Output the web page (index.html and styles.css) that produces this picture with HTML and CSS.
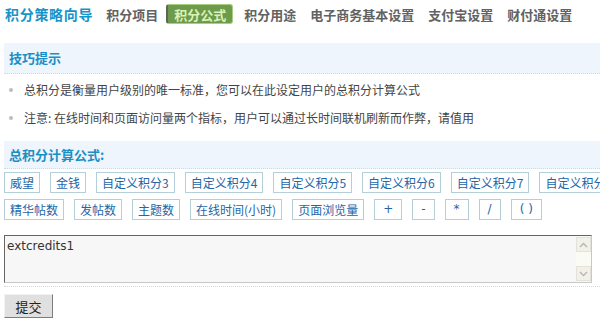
FILE: index.html
```html
<!DOCTYPE html>
<html lang="zh-CN">
<head>
    <meta charset="UTF-8">
    <title>积分策略向导</title>
    <link rel="stylesheet" href="styles.css">
</head>
<body>
    <div class="page">
        <div class="nav">
            <span class="nav-title">积分策略向导</span>
            <a class="tab">积分项目</a>
            <a class="tab active">积分公式</a>
            <a class="tab">积分用途</a>
            <a class="tab">电子商务基本设置</a>
            <a class="tab">支付宝设置</a>
            <a class="tab">财付通设置</a>
        </div>

        <div class="section-head">技巧提示</div>
        <ul class="tips">
            <li>总积分是衡量用户级别的唯一标准，您可以在此设定用户的总积分计算公式</li>
            <li>注意: 在线时间和页面访问量两个指标，用户可以通过长时间联机刷新而作弊，请值用</li>
        </ul>

        <div class="section-head">总积分计算公式:</div>
        <div class="btn-row">
            <span class="fbtn">威望</span>
            <span class="fbtn">金钱</span>
            <span class="fbtn">自定义积分3</span>
            <span class="fbtn">自定义积分4</span>
            <span class="fbtn">自定义积分5</span>
            <span class="fbtn">自定义积分6</span>
            <span class="fbtn">自定义积分7</span>
            <span class="fbtn">自定义积分8</span>
        </div>
        <div class="btn-row">
            <span class="fbtn">精华帖数</span>
            <span class="fbtn">发帖数</span>
            <span class="fbtn">主题数</span>
            <span class="fbtn">在线时间(小时)</span>
            <span class="fbtn">页面浏览量</span>
            <span class="fbtn op">+</span>
            <span class="fbtn op">-</span>
            <span class="fbtn op">*</span>
            <span class="fbtn op">/</span>
            <span class="fbtn op">( )</span>
        </div>

        <div class="formula-box">
            <textarea class="formula">extcredits1</textarea>
            <div class="scroll">
                <span class="scroll-btn">
                    <svg width="9" height="6" viewBox="0 0 9 6"><path d="M1 5 L4.5 1.5 L8 5" fill="none" stroke="#b9b9b2" stroke-width="1.5"/></svg>
                </span>
                <span class="scroll-track"></span>
                <span class="scroll-btn">
                    <svg width="9" height="6" viewBox="0 0 9 6"><path d="M1 1 L4.5 4.5 L8 1" fill="none" stroke="#b9b9b2" stroke-width="1.5"/></svg>
                </span>
            </div>
        </div>
        <div class="divider"></div>
        <button class="submit">提交</button>
    </div>
</body>
</html>
```

FILE: styles.css
```css
body, html {
    margin: 0;
    padding: 0;
    overflow: hidden;
    background: #fff;
    font-family: "Noto Sans CJK SC", "DejaVu Sans", sans-serif;
    font-size: 12px;
    color: #333;
}

.page {
    padding: 4px 4px 0 4px;
    width: 600px;
    box-sizing: border-box;
}

.nav {
    display: flex;
    align-items: center;
    height: 20px;
    padding-left: 1px;
    white-space: nowrap;
}

.nav-title {
    font-size: 14px;
    font-weight: bold;
    letter-spacing: 0.7px;
    color: #1594c9;
    margin-right: 6px;
}

.tab {
    display: flex;
    align-items: center;
    height: 20px;
    box-sizing: border-box;
    padding: 0 7px;
    font-size: 13px;
    font-weight: bold;
    color: #626262;
}

.tab.active {
    background-color: #6e9b4b;
    color: #d9f2b6;
    border: 1px solid #a6cf80;
    border-left: 2px solid #5f6658;
    border-radius: 3px;
    padding: 0 6px;
    margin: 0 4px 0 1px;
}

.section-head {
    margin-top: 19px;
    height: 30px;
    line-height: 30px;
    padding-left: 5px;
    margin-right: -8px;
    background-color: #eef5fc;
    border-bottom: 1px dotted #c9dbe8;
    font-size: 13px;
    font-weight: bold;
    color: #1a8fc6;
}

.tips + .section-head {
    margin-top: 0;
    height: 27px;
    line-height: 27px;
}

.tips {
    list-style: none;
    margin: 0;
    padding: 2px 0 9px 0;
}

.tips li {
    position: relative;
    line-height: 28px;
    padding-left: 20px;
    color: #444;
    white-space: nowrap;
}

.tips li::before {
    content: "";
    position: absolute;
    left: 5px;
    top: 12px;
    width: 4px;
    height: 4px;
    border-radius: 50%;
    background-color: #bdbdbd;
}

.btn-row {
    display: flex;
    gap: 10px;
    margin-top: 3px;
    white-space: nowrap;
}

.btn-row + .btn-row {
    margin-top: 6px;
}

.fbtn {
    flex-shrink: 0;
    height: 21px;
    line-height: 19px;
    box-sizing: border-box;
    padding: 0 5px;
    border: 1px solid #b5cfd9;
    color: #2366a8;
    font-size: 12px;
}

.fbtn.op {
    padding: 0 8px;
    font-family: "DejaVu Sans", sans-serif;
}

.formula-box {
    display: flex;
    margin-top: 15px;
    width: 588px;
    height: 48px;
    box-sizing: border-box;
    border-top: 1px solid #666;
    border-left: 1px solid #666;
    border-right: 1px solid #c8c8c8;
    border-bottom: 1px solid #c8c8c8;
    background-color: #f7f7f7;
}

.formula {
    flex-grow: 1;
    border: none;
    outline: none;
    resize: none;
    background: transparent;
    padding: 3px 2px;
    font-family: "DejaVu Sans", sans-serif;
    font-size: 12px;
    color: #333;
}

.scroll {
    display: flex;
    flex-direction: column;
    width: 15px;
    margin: 1px 0;
    background-color: #fbfbf6;
}

.scroll-btn {
    display: flex;
    align-items: center;
    justify-content: center;
    height: 15px;
    box-sizing: border-box;
    border: 1px solid #e2e2da;
    background-color: #f1f1ea;
}

.scroll-track {
    flex-grow: 1;
}

.divider {
    margin-top: 3px;
    margin-right: -4px;
    border-top: 1px dotted #c9dbe8;
}

.submit {
    display: block;
    margin-top: 7px;
    width: 49px;
    height: 24px;
    padding: 0;
    font-family: "Noto Sans CJK SC", sans-serif;
    font-size: 13px;
    color: #222;
    background-color: #e0e0e0;
    border: 1px solid;
    border-color: #f2f2f2 #7c7c7c #7c7c7c #f2f2f2;
}
```
